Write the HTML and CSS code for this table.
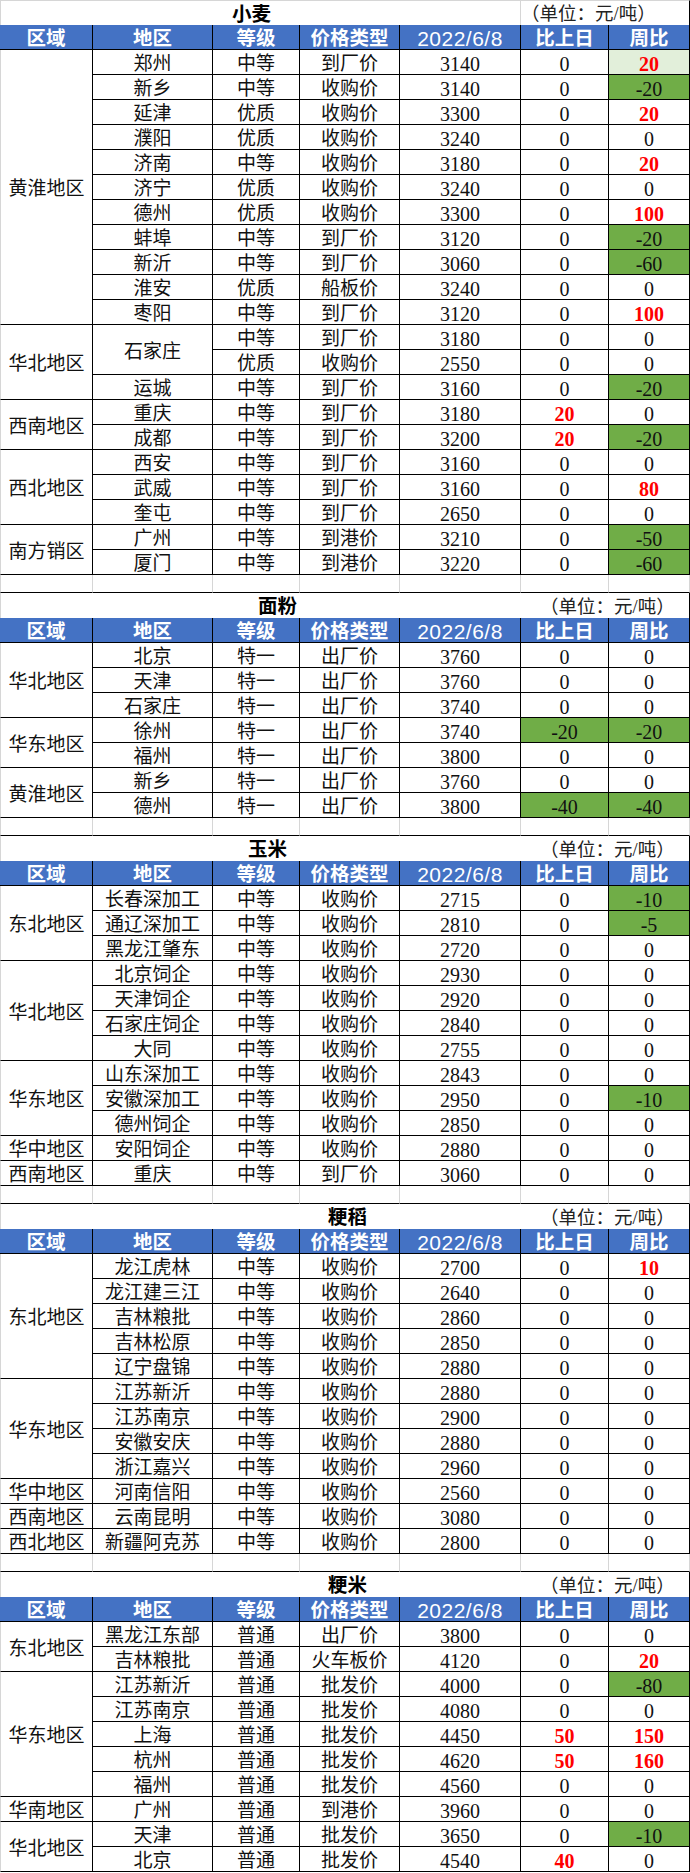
FILE: index.html
```html
<!DOCTYPE html>
<html lang="zh-CN">
<head>
<meta charset="utf-8">
<title>粮食价格</title>
<link rel="stylesheet" href="styles.css">
</head>
<body>

<section class="sheet first">
<div class="c title tw">小麦</div><div class="c unit uw">（单位：元/吨）</div>
<div class="c th">区域</div><div class="c th">地区</div><div class="c th">等级</div><div class="c th">价格类型</div><div class="c th date">2022/6/8</div><div class="c th">比上日</div><div class="c th">周比</div>
<div class="c rg r11">黄淮地区</div>
<div class="c">郑州</div><div class="c">中等</div><div class="c">到厂价</div><div class="c n">3140</div><div class="c n">0</div><div class="c n up lt">20</div>
<div class="c">新乡</div><div class="c">中等</div><div class="c">收购价</div><div class="c n">3140</div><div class="c n">0</div><div class="c n dn">-20</div>
<div class="c">延津</div><div class="c">优质</div><div class="c">收购价</div><div class="c n">3300</div><div class="c n">0</div><div class="c n up">20</div>
<div class="c">濮阳</div><div class="c">优质</div><div class="c">收购价</div><div class="c n">3240</div><div class="c n">0</div><div class="c n">0</div>
<div class="c">济南</div><div class="c">中等</div><div class="c">收购价</div><div class="c n">3180</div><div class="c n">0</div><div class="c n up">20</div>
<div class="c">济宁</div><div class="c">优质</div><div class="c">收购价</div><div class="c n">3240</div><div class="c n">0</div><div class="c n">0</div>
<div class="c">德州</div><div class="c">优质</div><div class="c">收购价</div><div class="c n">3300</div><div class="c n">0</div><div class="c n up">100</div>
<div class="c">蚌埠</div><div class="c">中等</div><div class="c">到厂价</div><div class="c n">3120</div><div class="c n">0</div><div class="c n dn">-20</div>
<div class="c">新沂</div><div class="c">中等</div><div class="c">到厂价</div><div class="c n">3060</div><div class="c n">0</div><div class="c n dn">-60</div>
<div class="c">淮安</div><div class="c">优质</div><div class="c">船板价</div><div class="c n">3240</div><div class="c n">0</div><div class="c n">0</div>
<div class="c">枣阳</div><div class="c">中等</div><div class="c">到厂价</div><div class="c n">3120</div><div class="c n">0</div><div class="c n up">100</div>
<div class="c rg r3">华北地区</div>
<div class="c r2">石家庄</div><div class="c">中等</div><div class="c">到厂价</div><div class="c n">3180</div><div class="c n">0</div><div class="c n">0</div>
<div class="c">优质</div><div class="c">收购价</div><div class="c n">2550</div><div class="c n">0</div><div class="c n">0</div>
<div class="c">运城</div><div class="c">中等</div><div class="c">到厂价</div><div class="c n">3160</div><div class="c n">0</div><div class="c n dn">-20</div>
<div class="c rg r2">西南地区</div>
<div class="c">重庆</div><div class="c">中等</div><div class="c">到厂价</div><div class="c n">3180</div><div class="c n up">20</div><div class="c n">0</div>
<div class="c">成都</div><div class="c">中等</div><div class="c">到厂价</div><div class="c n">3200</div><div class="c n up">20</div><div class="c n dn">-20</div>
<div class="c rg r3">西北地区</div>
<div class="c">西安</div><div class="c">中等</div><div class="c">到厂价</div><div class="c n">3160</div><div class="c n">0</div><div class="c n">0</div>
<div class="c">武威</div><div class="c">中等</div><div class="c">到厂价</div><div class="c n">3160</div><div class="c n">0</div><div class="c n up">80</div>
<div class="c">奎屯</div><div class="c">中等</div><div class="c">到厂价</div><div class="c n">2650</div><div class="c n">0</div><div class="c n">0</div>
<div class="c rg r2">南方销区</div>
<div class="c">广州</div><div class="c">中等</div><div class="c">到港价</div><div class="c n">3210</div><div class="c n">0</div><div class="c n dn">-50</div>
<div class="c">厦门</div><div class="c">中等</div><div class="c">到港价</div><div class="c n">3220</div><div class="c n">0</div><div class="c n dn">-60</div>
</section>
<div class="spacer"><div></div><div></div><div></div><div></div><div></div><div></div><div></div></div>

<section class="sheet">
<div class="c title tf">面粉</div><div class="c unit">（单位：元/吨）</div>
<div class="c th">区域</div><div class="c th">地区</div><div class="c th">等级</div><div class="c th">价格类型</div><div class="c th date">2022/6/8</div><div class="c th">比上日</div><div class="c th">周比</div>
<div class="c rg r3">华北地区</div>
<div class="c">北京</div><div class="c">特一</div><div class="c">出厂价</div><div class="c n">3760</div><div class="c n">0</div><div class="c n">0</div>
<div class="c">天津</div><div class="c">特一</div><div class="c">出厂价</div><div class="c n">3760</div><div class="c n">0</div><div class="c n">0</div>
<div class="c">石家庄</div><div class="c">特一</div><div class="c">出厂价</div><div class="c n">3740</div><div class="c n">0</div><div class="c n">0</div>
<div class="c rg r2">华东地区</div>
<div class="c">徐州</div><div class="c">特一</div><div class="c">出厂价</div><div class="c n">3740</div><div class="c n dn">-20</div><div class="c n dn">-20</div>
<div class="c">福州</div><div class="c">特一</div><div class="c">出厂价</div><div class="c n">3800</div><div class="c n">0</div><div class="c n">0</div>
<div class="c rg r2">黄淮地区</div>
<div class="c">新乡</div><div class="c">特一</div><div class="c">出厂价</div><div class="c n">3760</div><div class="c n">0</div><div class="c n">0</div>
<div class="c">德州</div><div class="c">特一</div><div class="c">出厂价</div><div class="c n">3800</div><div class="c n dn">-40</div><div class="c n dn">-40</div>
</section>
<div class="spacer"><div></div><div></div><div></div><div></div><div></div><div></div><div></div></div>

<section class="sheet">
<div class="c title tc">玉米</div><div class="c unit">（单位：元/吨）</div>
<div class="c th">区域</div><div class="c th">地区</div><div class="c th">等级</div><div class="c th">价格类型</div><div class="c th date">2022/6/8</div><div class="c th">比上日</div><div class="c th">周比</div>
<div class="c rg r3">东北地区</div>
<div class="c">长春深加工</div><div class="c">中等</div><div class="c">收购价</div><div class="c n">2715</div><div class="c n">0</div><div class="c n dn">-10</div>
<div class="c">通辽深加工</div><div class="c">中等</div><div class="c">收购价</div><div class="c n">2810</div><div class="c n">0</div><div class="c n dn">-5</div>
<div class="c">黑龙江肇东</div><div class="c">中等</div><div class="c">收购价</div><div class="c n">2720</div><div class="c n">0</div><div class="c n">0</div>
<div class="c rg r4">华北地区</div>
<div class="c">北京饲企</div><div class="c">中等</div><div class="c">收购价</div><div class="c n">2930</div><div class="c n">0</div><div class="c n">0</div>
<div class="c">天津饲企</div><div class="c">中等</div><div class="c">收购价</div><div class="c n">2920</div><div class="c n">0</div><div class="c n">0</div>
<div class="c">石家庄饲企</div><div class="c">中等</div><div class="c">收购价</div><div class="c n">2840</div><div class="c n">0</div><div class="c n">0</div>
<div class="c">大同</div><div class="c">中等</div><div class="c">收购价</div><div class="c n">2755</div><div class="c n">0</div><div class="c n">0</div>
<div class="c rg r3">华东地区</div>
<div class="c">山东深加工</div><div class="c">中等</div><div class="c">收购价</div><div class="c n">2843</div><div class="c n">0</div><div class="c n">0</div>
<div class="c">安徽深加工</div><div class="c">中等</div><div class="c">收购价</div><div class="c n">2950</div><div class="c n">0</div><div class="c n dn">-10</div>
<div class="c">德州饲企</div><div class="c">中等</div><div class="c">收购价</div><div class="c n">2850</div><div class="c n">0</div><div class="c n">0</div>
<div class="c rg">华中地区</div>
<div class="c">安阳饲企</div><div class="c">中等</div><div class="c">收购价</div><div class="c n">2880</div><div class="c n">0</div><div class="c n">0</div>
<div class="c rg">西南地区</div>
<div class="c">重庆</div><div class="c">中等</div><div class="c">到厂价</div><div class="c n">3060</div><div class="c n">0</div><div class="c n">0</div>
</section>
<div class="spacer"><div></div><div></div><div></div><div></div><div></div><div></div><div></div></div>

<section class="sheet">
<div class="c title tp">粳稻</div><div class="c unit">（单位：元/吨）</div>
<div class="c th">区域</div><div class="c th">地区</div><div class="c th">等级</div><div class="c th">价格类型</div><div class="c th date">2022/6/8</div><div class="c th">比上日</div><div class="c th">周比</div>
<div class="c rg r5">东北地区</div>
<div class="c">龙江虎林</div><div class="c">中等</div><div class="c">收购价</div><div class="c n">2700</div><div class="c n">0</div><div class="c n up">10</div>
<div class="c">龙江建三江</div><div class="c">中等</div><div class="c">收购价</div><div class="c n">2640</div><div class="c n">0</div><div class="c n">0</div>
<div class="c">吉林粮批</div><div class="c">中等</div><div class="c">收购价</div><div class="c n">2860</div><div class="c n">0</div><div class="c n">0</div>
<div class="c">吉林松原</div><div class="c">中等</div><div class="c">收购价</div><div class="c n">2850</div><div class="c n">0</div><div class="c n">0</div>
<div class="c">辽宁盘锦</div><div class="c">中等</div><div class="c">收购价</div><div class="c n">2880</div><div class="c n">0</div><div class="c n">0</div>
<div class="c rg r4">华东地区</div>
<div class="c">江苏新沂</div><div class="c">中等</div><div class="c">收购价</div><div class="c n">2880</div><div class="c n">0</div><div class="c n">0</div>
<div class="c">江苏南京</div><div class="c">中等</div><div class="c">收购价</div><div class="c n">2900</div><div class="c n">0</div><div class="c n">0</div>
<div class="c">安徽安庆</div><div class="c">中等</div><div class="c">收购价</div><div class="c n">2880</div><div class="c n">0</div><div class="c n">0</div>
<div class="c">浙江嘉兴</div><div class="c">中等</div><div class="c">收购价</div><div class="c n">2960</div><div class="c n">0</div><div class="c n">0</div>
<div class="c rg">华中地区</div>
<div class="c">河南信阳</div><div class="c">中等</div><div class="c">收购价</div><div class="c n">2560</div><div class="c n">0</div><div class="c n">0</div>
<div class="c rg">西南地区</div>
<div class="c">云南昆明</div><div class="c">中等</div><div class="c">收购价</div><div class="c n">3080</div><div class="c n">0</div><div class="c n">0</div>
<div class="c rg">西北地区</div>
<div class="c">新疆阿克苏</div><div class="c">中等</div><div class="c">收购价</div><div class="c n">2800</div><div class="c n">0</div><div class="c n">0</div>
</section>
<div class="spacer"><div></div><div></div><div></div><div></div><div></div><div></div><div></div></div>

<section class="sheet">
<div class="c title tr">粳米</div><div class="c unit">（单位：元/吨）</div>
<div class="c th">区域</div><div class="c th">地区</div><div class="c th">等级</div><div class="c th">价格类型</div><div class="c th date">2022/6/8</div><div class="c th">比上日</div><div class="c th">周比</div>
<div class="c rg r2">东北地区</div>
<div class="c">黑龙江东部</div><div class="c">普通</div><div class="c">出厂价</div><div class="c n">3800</div><div class="c n">0</div><div class="c n">0</div>
<div class="c">吉林粮批</div><div class="c">普通</div><div class="c">火车板价</div><div class="c n">4120</div><div class="c n">0</div><div class="c n up">20</div>
<div class="c rg r5">华东地区</div>
<div class="c">江苏新沂</div><div class="c">普通</div><div class="c">批发价</div><div class="c n">4000</div><div class="c n">0</div><div class="c n dn">-80</div>
<div class="c">江苏南京</div><div class="c">普通</div><div class="c">批发价</div><div class="c n">4080</div><div class="c n">0</div><div class="c n">0</div>
<div class="c">上海</div><div class="c">普通</div><div class="c">批发价</div><div class="c n">4450</div><div class="c n up">50</div><div class="c n up">150</div>
<div class="c">杭州</div><div class="c">普通</div><div class="c">批发价</div><div class="c n">4620</div><div class="c n up">50</div><div class="c n up">160</div>
<div class="c">福州</div><div class="c">普通</div><div class="c">批发价</div><div class="c n">4560</div><div class="c n">0</div><div class="c n">0</div>
<div class="c rg">华南地区</div>
<div class="c">广州</div><div class="c">普通</div><div class="c">到港价</div><div class="c n">3960</div><div class="c n">0</div><div class="c n">0</div>
<div class="c rg r2">华北地区</div>
<div class="c">天津</div><div class="c">普通</div><div class="c">批发价</div><div class="c n">3650</div><div class="c n">0</div><div class="c n dn">-10</div>
<div class="c">北京</div><div class="c">普通</div><div class="c">批发价</div><div class="c n">4540</div><div class="c n up">40</div><div class="c n">0</div>
</section>

</body>
</html>
```

FILE: styles.css
```css
* {
  box-sizing: border-box;
}

html,
body {
  margin: 0;
  padding: 0;
  background: #ffffff;
}

body {
  width: 690px;
  font-family: "Liberation Serif", "Noto Sans CJK SC", serif;
  color: #111111;
}

.sheet,
.spacer {
  display: grid;
  grid-template-columns: 93px 120px 87px 100px 121px 88px 81px;
}

.sheet {
  grid-auto-rows: 25px;
}

.spacer {
  height: 18px;
}

.spacer > div {
  border-right: 1px solid #d6d6d6;
  border-bottom: 1px solid #000000;
}

.spacer > div:first-child {
  border-left: 1px solid #d6d6d6;
}

.c {
  display: flex;
  align-items: center;
  justify-content: center;
  padding-top: 3px;
  border-right: 1px solid #000000;
  border-bottom: 1px solid #000000;
  font-size: 19px;
  line-height: 1;
  white-space: nowrap;
}

.n {
  font-size: 20px;
}

.up {
  color: #ff0000;
  font-weight: bold;
}

.dn {
  background: #70ad47;
}

.lt {
  background: #e2efda;
}

.rg {
  grid-column: 1;
  border-left: 1px solid #d6d6d6;
}

.r2 { grid-row: span 2; }
.r3 { grid-row: span 3; }
.r4 { grid-row: span 4; }
.r5 { grid-row: span 5; }
.r11 { grid-row: span 11; }

/* title row */
.title {
  grid-column: 1 / 6;
  justify-content: flex-start;
  border-left: 1px solid #d6d6d6;
  border-right: none;
  border-bottom: none;
  font-weight: bold;
  font-size: 19.5px;
  color: #000000;
}

.tw { padding-left: 231px; }
.tf { padding-left: 257px; }
.tc { padding-left: 247px; }
.tp { padding-left: 327px; }
.tr { padding-left: 327px; }

.unit {
  grid-column: 6 / 8;
  justify-content: flex-start;
  padding-left: 19px;
  border-bottom: none;
  font-size: 18.5px;
  color: #222222;
}

.first .title {
  border-top: 1px solid #d6d6d6;
  border-right: 1px solid #d6d6d6;
}

.first .unit {
  border-top: 1px solid #d6d6d6;
  padding-left: 0;
}

/* header row */
.th {
  background: #4472c4;
  color: #ffffff;
  font-weight: bold;
  font-size: 19.5px;
}

.th.date {
  font-family: "Liberation Sans", sans-serif;
  font-weight: normal;
  font-size: 21px;
  letter-spacing: 0.5px;
}
```
